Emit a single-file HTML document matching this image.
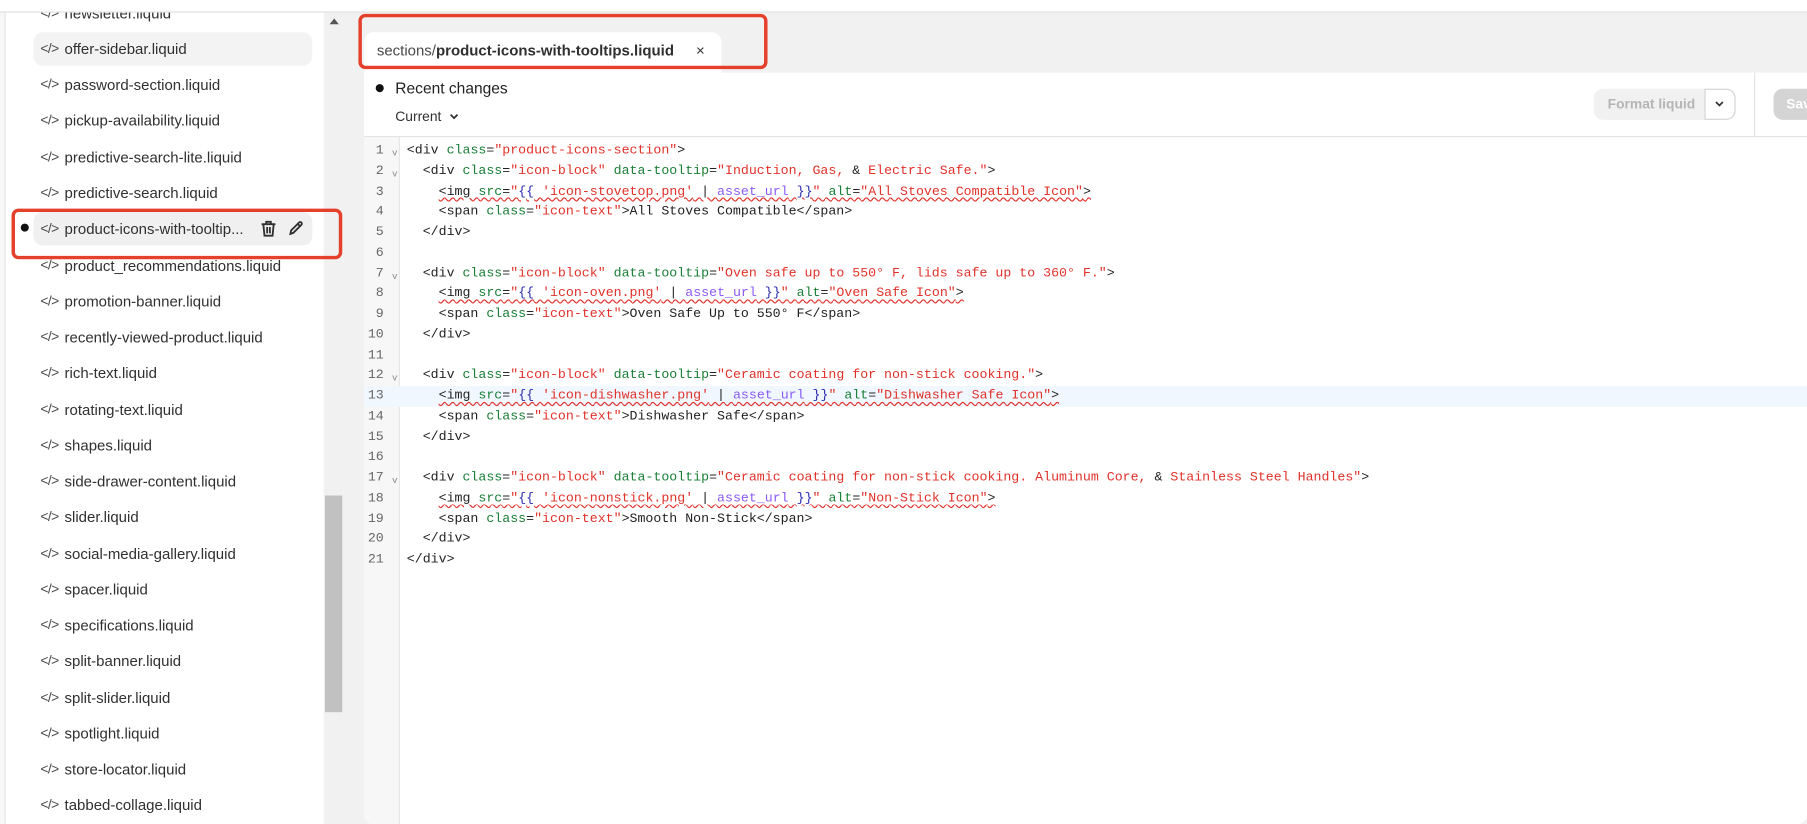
<!DOCTYPE html>
<html><head><meta charset="utf-8"><style>
*{box-sizing:border-box;margin:0;padding:0}
html,body{width:1807px;height:824px;overflow:hidden;background:#fff}
#w{position:absolute;left:0;top:0;width:1568px;height:715px;transform:scale(1.15242);transform-origin:0 0;font-family:"Liberation Sans",sans-serif;color:#303030}
.abs{position:absolute}
.it{position:absolute;left:29px;width:242px;height:29px;font-size:13px;line-height:29px;color:#303030;border-radius:8px}
.it .ic{position:absolute;left:6px;top:0;font-size:12px;letter-spacing:-0.5px;color:#4a4a4a}
.it .tx{position:absolute;left:27px}
.code{position:absolute;left:353px;top:122px;font-family:"Liberation Mono",monospace;font-size:11.5px;color:#222}
.ln{height:17.75px;line-height:17.75px;white-space:pre}
.g{color:#1a7f37}.r{color:#e0322a}.p{color:#8a5cf5}.b{color:#2a2ab0}
.wv{text-decoration:underline wavy #e0322a;text-decoration-thickness:1px;text-underline-offset:2px}
.num{position:absolute;left:316px;width:31px;top:122px;font-family:"Liberation Mono",monospace;font-size:11.5px;color:#666;text-align:right}
.num div{height:17.75px;line-height:17.75px;padding-right:14px;position:relative}
.num span{position:absolute;right:2px;top:3px;font-size:8px;color:#888}
</style></head><body><div id="w">
<div class="abs" style="left:0;top:0;width:1568px;height:11px;background:#fff;border-bottom:1px solid #ddd"></div>
<div class="abs" style="left:0;top:11px;width:5px;height:704px;background:#f7f7f7;border-right:1px solid #e3e3e3"></div>
<div class="abs" style="left:5px;top:11px;width:276px;height:704px;background:#fff"></div>
<div class="abs" style="left:281px;top:11px;width:17px;height:704px;background:#f1f1f1"></div>
<div class="abs" style="left:286px;top:16px;width:0;height:0;border-left:4px solid transparent;border-right:4px solid transparent;border-bottom:5px solid #555"></div>
<div class="abs" style="left:282px;top:430px;width:15px;height:188px;background:#c1c1c1"></div>
<div class="abs" style="left:298px;top:11px;width:1270px;height:704px;background:#f1f1f1"></div>

<div class="abs" style="left:5px;top:11px;width:276px;height:704px;overflow:hidden">
<div style="position:relative;left:-5px;top:-11px">
<div class="it" style="top:-3px"><span class="ic">&lt;/&gt;</span><span class="tx">newsletter.liquid</span></div>
<div class="it" style="top:28px;background:#f3f3f3"><span class="ic">&lt;/&gt;</span><span class="tx">offer-sidebar.liquid</span></div>
<div class="it" style="top:59px"><span class="ic">&lt;/&gt;</span><span class="tx">password-section.liquid</span></div>
<div class="it" style="top:90px"><span class="ic">&lt;/&gt;</span><span class="tx">pickup-availability.liquid</span></div>
<div class="it" style="top:122px"><span class="ic">&lt;/&gt;</span><span class="tx">predictive-search-lite.liquid</span></div>
<div class="it" style="top:153px"><span class="ic">&lt;/&gt;</span><span class="tx">predictive-search.liquid</span></div>
<div class="it" style="top:184px;background:#f0f0f0"><span class="ic">&lt;/&gt;</span><span class="tx">product-icons-with-tooltip...</span>
<svg style="position:absolute;left:197px;top:7px" width="14" height="15" viewBox="0 0 14 15" fill="none" stroke="#303030" stroke-width="1.6"><path d="M1 3.5h12M5 3.5V1.5h4v2M2.5 3.5l1 10h7l1-10M5.8 6v5.5M8.2 6v5.5"/></svg>
<svg style="position:absolute;left:221px;top:7px" width="14" height="14" viewBox="0 0 14 14" fill="none" stroke="#303030" stroke-width="1.6"><path d="M2 12l.6-3L9.5 2.1a1.4 1.4 0 012 2L4.6 11 2 12zM8.3 3.3l2.2 2.2"/></svg>
</div>
<div class="abs" style="left:18px;top:194px;width:7px;height:7px;border-radius:50%;background:#111"></div>
<div class="it" style="top:216px"><span class="ic">&lt;/&gt;</span><span class="tx">product_recommendations.liquid</span></div>
<div class="it" style="top:247px"><span class="ic">&lt;/&gt;</span><span class="tx">promotion-banner.liquid</span></div>
<div class="it" style="top:278px"><span class="ic">&lt;/&gt;</span><span class="tx">recently-viewed-product.liquid</span></div>
<div class="it" style="top:309px"><span class="ic">&lt;/&gt;</span><span class="tx">rich-text.liquid</span></div>
<div class="it" style="top:341px"><span class="ic">&lt;/&gt;</span><span class="tx">rotating-text.liquid</span></div>
<div class="it" style="top:372px"><span class="ic">&lt;/&gt;</span><span class="tx">shapes.liquid</span></div>
<div class="it" style="top:403px"><span class="ic">&lt;/&gt;</span><span class="tx">side-drawer-content.liquid</span></div>
<div class="it" style="top:434px"><span class="ic">&lt;/&gt;</span><span class="tx">slider.liquid</span></div>
<div class="it" style="top:466px"><span class="ic">&lt;/&gt;</span><span class="tx">social-media-gallery.liquid</span></div>
<div class="it" style="top:497px"><span class="ic">&lt;/&gt;</span><span class="tx">spacer.liquid</span></div>
<div class="it" style="top:528px"><span class="ic">&lt;/&gt;</span><span class="tx">specifications.liquid</span></div>
<div class="it" style="top:559px"><span class="ic">&lt;/&gt;</span><span class="tx">split-banner.liquid</span></div>
<div class="it" style="top:591px"><span class="ic">&lt;/&gt;</span><span class="tx">split-slider.liquid</span></div>
<div class="it" style="top:622px"><span class="ic">&lt;/&gt;</span><span class="tx">spotlight.liquid</span></div>
<div class="it" style="top:653px"><span class="ic">&lt;/&gt;</span><span class="tx">store-locator.liquid</span></div>
<div class="it" style="top:684px"><span class="ic">&lt;/&gt;</span><span class="tx">tabbed-collage.liquid</span></div>
</div></div>
<div class="abs" style="left:10px;top:181px;width:287px;height:44px;border:3px solid #e5402b;border-radius:6px"></div>

<div class="abs" style="left:316px;top:28px;width:310px;height:36px;background:#fff;border-radius:8px 8px 0 0;font-size:13px;line-height:32px;padding-left:11px;color:#4a4a4a">sections/<b style="color:#303030;font-weight:600">product-icons-with-tooltips.liquid</b><span style="position:absolute;left:288px;top:0;font-size:13px;color:#303030">×</span></div>
<div class="abs" style="left:311px;top:12px;width:355px;height:48px;border:3px solid #e5402b;border-radius:6px"></div>

<div class="abs" style="left:316px;top:63px;width:1252px;height:652px;background:#fff;border-radius:0 0 8px 8px"></div>
<div class="abs" style="left:316px;top:118px;width:1252px;height:1px;background:#e3e3e3"></div>
<div class="abs" style="left:326px;top:73px;width:7px;height:7px;border-radius:50%;background:#111"></div>
<div class="abs" style="left:343px;top:69px;font-size:13.5px;font-weight:500;color:#222">Recent changes</div>
<div class="abs" style="left:343px;top:94px;font-size:12px;color:#303030">Current <svg width="10" height="8" viewBox="0 0 10 8" style="margin-left:3px"><path d="M2 2.5l3 3 3-3" stroke="#303030" stroke-width="1.5" fill="none"/></svg></div>
<div class="abs" style="left:1383px;top:77px;width:123px;height:27px;border-radius:8px;background:#f1f1f1"></div>
<div class="abs" style="left:1395px;top:83px;font-size:12px;font-weight:600;color:#b5b5b5">Format liquid</div>
<div class="abs" style="left:1479px;top:77px;width:27px;height:27px;border-radius:0 8px 8px 0;background:#fff;border:1px solid #d4d4d4"></div>
<svg class="abs" style="left:1487px;top:86px" width="10" height="8" viewBox="0 0 10 8"><path d="M2 2.5l3 3 3-3" stroke="#303030" stroke-width="1.5" fill="none"/></svg>
<div class="abs" style="left:1522px;top:63px;width:1px;height:55px;background:#e3e3e3"></div>
<div class="abs" style="left:1539px;top:77px;width:60px;height:27px;border-radius:8px;background:#d4d4d4;color:#fff;font-size:12px;font-weight:600;line-height:27px;padding-left:11px">Save</div>

<div class="abs" style="left:316px;top:119px;width:31px;height:596px;background:#f7f7f7;border-right:1px solid #e0e0e0;border-bottom-left-radius:8px"></div>
<div class="abs" style="left:316px;top:335px;width:1252px;height:18px;background:#f0f7fe"></div>
<div class="num">
<div>1<span>v</span></div><div>2<span>v</span></div><div>3</div><div>4</div><div>5</div><div>6</div><div>7<span>v</span></div><div>8</div><div>9</div><div>10</div><div>11</div><div>12<span>v</span></div><div>13</div><div>14</div><div>15</div><div>16</div><div>17<span>v</span></div><div>18</div><div>19</div><div>20</div><div>21</div>
</div>
<div class="code"><div class="ln">&lt;div <span class="g">class</span>=<span class="r">"product-icons-section"</span>&gt;</div><div class="ln">  &lt;div <span class="g">class</span>=<span class="r">"icon-block"</span> <span class="g">data-tooltip</span>=<span class="r">"Induction, Gas, </span>&amp;<span class="r"> Electric Safe."</span>&gt;</div><div class="ln">    <span class="wv">&lt;img <span class="g">src</span>=<span class="r">"</span><span class="b">{{</span> <span class="r">'icon-stovetop.png'</span> | <span class="p">asset_url</span> <span class="b">}}</span><span class="r">"</span> <span class="g">alt</span>=<span class="r">"All Stoves Compatible Icon"</span>&gt;</span></div><div class="ln">    &lt;span <span class="g">class</span>=<span class="r">"icon-text"</span>&gt;All Stoves Compatible&lt;/span&gt;</div><div class="ln">  &lt;/div&gt;</div><div class="ln"> </div><div class="ln">  &lt;div <span class="g">class</span>=<span class="r">"icon-block"</span> <span class="g">data-tooltip</span>=<span class="r">"Oven safe up to 550° F, lids safe up to 360° F."</span>&gt;</div><div class="ln">    <span class="wv">&lt;img <span class="g">src</span>=<span class="r">"</span><span class="b">{{</span> <span class="r">'icon-oven.png'</span> | <span class="p">asset_url</span> <span class="b">}}</span><span class="r">"</span> <span class="g">alt</span>=<span class="r">"Oven Safe Icon"</span>&gt;</span></div><div class="ln">    &lt;span <span class="g">class</span>=<span class="r">"icon-text"</span>&gt;Oven Safe Up to 550° F&lt;/span&gt;</div><div class="ln">  &lt;/div&gt;</div><div class="ln"> </div><div class="ln">  &lt;div <span class="g">class</span>=<span class="r">"icon-block"</span> <span class="g">data-tooltip</span>=<span class="r">"Ceramic coating for non-stick cooking."</span>&gt;</div><div class="ln">    <span class="wv">&lt;img <span class="g">src</span>=<span class="r">"</span><span class="b">{{</span> <span class="r">'icon-dishwasher.png'</span> | <span class="p">asset_url</span> <span class="b">}}</span><span class="r">"</span> <span class="g">alt</span>=<span class="r">"Dishwasher Safe Icon"</span>&gt;</span></div><div class="ln">    &lt;span <span class="g">class</span>=<span class="r">"icon-text"</span>&gt;Dishwasher Safe&lt;/span&gt;</div><div class="ln">  &lt;/div&gt;</div><div class="ln"> </div><div class="ln">  &lt;div <span class="g">class</span>=<span class="r">"icon-block"</span> <span class="g">data-tooltip</span>=<span class="r">"Ceramic coating for non-stick cooking. Aluminum Core, </span>&amp;<span class="r"> Stainless Steel Handles"</span>&gt;</div><div class="ln">    <span class="wv">&lt;img <span class="g">src</span>=<span class="r">"</span><span class="b">{{</span> <span class="r">'icon-nonstick.png'</span> | <span class="p">asset_url</span> <span class="b">}}</span><span class="r">"</span> <span class="g">alt</span>=<span class="r">"Non-Stick Icon"</span>&gt;</span></div><div class="ln">    &lt;span <span class="g">class</span>=<span class="r">"icon-text"</span>&gt;Smooth Non-Stick&lt;/span&gt;</div><div class="ln">  &lt;/div&gt;</div><div class="ln">&lt;/div&gt;</div></div>
</div></body></html>
